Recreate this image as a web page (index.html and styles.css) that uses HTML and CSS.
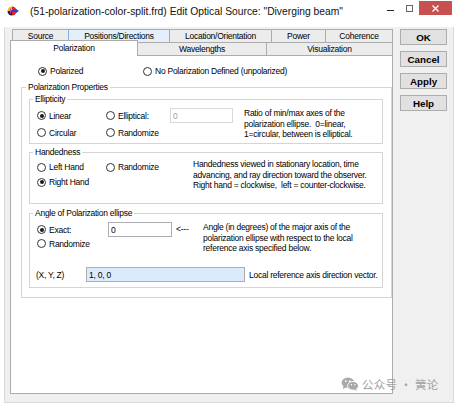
FILE: index.html
```html
<!doctype html>
<html lang="en">
    <head>
        <meta charset="UTF-8" />
        <title>Edit Optical Source</title>
        <link rel="stylesheet" href="styles.css">
    </head>
    <body>
        <div class="window">
            <div class="titlebar">
                <svg class="app-icon" width="12" height="12" viewBox="0 0 12 12">
                    <path d="M5 1.5 A4.5 4.5 0 0 0 0.5 6 L5 6 Z" fill="#f2c200" />
                    <path d="M0.5 6 A4.5 4.5 0 0 0 5 10.5 L5 6 Z" fill="#1b1b55" />
                    <path d="M5 1.5 A4.5 4.5 0 0 1 5 10.5 Z" fill="#e0202a" />
                    <path d="M3.5 3.5 V8.5" stroke="#c43bc4" stroke-width="1" />
                    <path d="M4 6 H9.5" stroke="#1f45d8" stroke-width="1.6" />
                    <path d="M8.5 3.5 L11.8 6 L8.5 8.5 Z" fill="#1f45d8" />
                </svg>
                <span class="title">(51-polarization-color-split.frd) Edit Optical Source: "Diverging beam"</span>
                <div class="caption-btns">
                    <span class="cap-btn"><span class="min-glyph"></span></span>
                    <span class="cap-btn"><span class="max-glyph"></span></span>
                    <span class="cap-btn close">
                        <svg width="7" height="7" viewBox="0 0 7 7">
                            <path d="M0.5 0.5 L6.5 6.5 M6.5 0.5 L0.5 6.5" stroke="#fff" stroke-width="1.3" />
                        </svg>
                    </span>
                </div>
            </div>

            <div class="client">
                <div class="tab-control">
                    <div class="tab-row back">
                        <div class="tab w-source">Source</div>
                        <div class="tab hover w-positions">Positions/Directions</div>
                        <div class="tab w-location">Location/Orientation</div>
                        <div class="tab w-power">Power</div>
                        <div class="tab w-coherence">Coherence</div>
                    </div>
                    <div class="tab-row front">
                        <div class="tab selected w-polar">Polarization</div>
                        <div class="tab w-wave">Wavelengths</div>
                        <div class="tab w-vis">Visualization</div>
                    </div>

                    <div class="tab-panel">
                        <div class="mode-row">
                            <label class="radio-item mode-first"><span class="radio checked"></span>Polarized</label>
                            <label class="radio-item"><span class="radio"></span>No Polarization Defined (unpolarized)</label>
                        </div>

                        <fieldset class="group outer">
                            <legend>Polarization Properties</legend>

                            <fieldset class="group ellipticity">
                                <legend>Ellipticity</legend>
                                <div class="ell-grid">
                                    <label class="radio-item"><span class="radio checked"></span>Linear</label>
                                    <label class="radio-item"><span class="radio"></span>Elliptical:</label>
                                    <input class="field disabled w-ratio" type="text" value="0" />
                                    <p class="desc span2 ell-desc">Ratio of min/max axes of the<br>polarization ellipse.&nbsp; 0=linear,<br>1=circular, between is elliptical.</p>
                                    <label class="radio-item"><span class="radio"></span>Circular</label>
                                    <label class="radio-item"><span class="radio"></span>Randomize</label>
                                </div>
                            </fieldset>

                            <fieldset class="group handedness">
                                <legend>Handedness</legend>
                                <div class="hand-grid">
                                    <label class="radio-item"><span class="radio"></span>Left Hand</label>
                                    <label class="radio-item"><span class="radio"></span>Randomize</label>
                                    <p class="desc span2 hand-desc">Handedness viewed in stationary location, time<br>advancing, and ray direction toward the observer.<br>Right hand = clockwise,&nbsp; left = counter-clockwise.</p>
                                    <label class="radio-item"><span class="radio checked"></span>Right Hand</label>
                                </div>
                            </fieldset>

                            <fieldset class="group angle">
                                <legend>Angle of Polarization ellipse</legend>
                                <div class="angle-grid">
                                    <label class="radio-item"><span class="radio checked"></span>Exact:</label>
                                    <input class="field w-angle" type="text" value="0" />
                                    <span class="arrow">&lt;---</span>
                                    <p class="desc span2">Angle (in degrees) of the major axis of the<br>polarization ellipse with respect to the local<br>reference axis specified below.</p>
                                    <label class="radio-item"><span class="radio"></span>Randomize</label>
                                </div>
                                <div class="xyz-row">
                                    <span class="xyz-label">(X, Y, Z)</span>
                                    <input class="field vector w-vector" type="text" value="1, 0, 0" />
                                    <span class="xyz-note">Local reference axis direction vector.</span>
                                </div>
                            </fieldset>
                        </fieldset>
                    </div>
                </div>

                <div class="buttons">
                    <button class="btn">OK</button>
                    <button class="btn">Cancel</button>
                    <button class="btn">Apply</button>
                    <button class="btn">Help</button>
                </div>
            </div>

            <div class="watermark">
                <svg width="18" height="14" viewBox="0 0 18 14">
                    <ellipse cx="7" cy="5.6" rx="6.4" ry="5.2" fill="#a9a9a9" />
                    <path d="M2.5 9 L2 12 L5.5 10.2 Z" fill="#a9a9a9" />
                    <ellipse cx="12" cy="8.8" rx="5.4" ry="4.4" fill="#a9a9a9" stroke="#fff" stroke-width="1" />
                    <path d="M15 12 L16.2 13.8 L13 12.8 Z" fill="#a9a9a9" />
                    <circle cx="4.8" cy="4.2" r="0.9" fill="#fff" />
                    <circle cx="8.6" cy="4.2" r="0.9" fill="#fff" />
                    <circle cx="10.4" cy="7.8" r="0.7" fill="#fff" />
                    <circle cx="13.8" cy="7.8" r="0.7" fill="#fff" />
                </svg>
                <span>公众号 · 簧论</span>
            </div>
        </div>
    </body>
</html>
```

FILE: styles.css
```css
body {
    margin: 0;
    font-family: "Liberation Sans", Arial, sans-serif;
    font-size: 8.5px;
    letter-spacing: -0.25px;
    color: #000;
    background-color: #fff;
}
.window {
    position: relative;
    width: 458px;
    height: 403px;
    display: flex;
    flex-direction: column;
    background-color: #fff;
    overflow: hidden;
}

/* Title bar */
.titlebar {
    height: 27px;
    flex-shrink: 0;
    display: flex;
    align-items: flex-start;
}
.app-icon {
    margin: 5px 0 0 7px;
    flex-shrink: 0;
}
.title {
    margin: 6px 0 0 11px;
    font-size: 10.3px;
    line-height: 12px;
    letter-spacing: 0;
    color: #111;
    white-space: nowrap;
}
.caption-btns {
    margin-left: auto;
    margin-right: 6px;
    display: flex;
    align-items: flex-start;
}
.cap-btn {
    width: 19px;
    height: 15px;
    display: flex;
    justify-content: center;
    align-items: flex-start;
}
.min-glyph {
    width: 7px;
    height: 1px;
    margin-top: 10px;
    background-color: #222;
}
.max-glyph {
    width: 7px;
    height: 7px;
    margin-top: 5px;
    box-sizing: border-box;
    border: 1px solid #666;
}
.cap-btn.close {
    width: 33px;
    height: 14px;
    margin-top: 1px;
    align-items: center;
    background-color: #c75050;
}

/* Client area */
.client {
    flex: 1;
    margin: 0 4px;
    display: flex;
    gap: 7px;
    padding: 2px 6px 8px 5px;
    background-color: #f0f0f0;
    border: 1px solid #dadada;
    border-top: none;
}
.tab-control {
    width: 383px;
    display: flex;
    flex-direction: column;
}
.tab-row {
    display: flex;
    align-items: flex-start;
    height: 13px;
}
.tab-row.back {
    margin-left: 2px;
}
.tab {
    box-sizing: border-box;
    height: 13px;
    line-height: 12px;
    margin-left: -1px;
    text-align: center;
    white-space: nowrap;
    border: 1px solid #acacac;
    border-bottom: none;
    background-color: #ececec;
}
.tab:first-child {
    margin-left: 0;
}
.tab.hover {
    background-color: #e3effa;
    border-color: #7eb4ea;
    position: relative;
    z-index: 1;
}
.tab.selected {
    position: relative;
    z-index: 2;
    height: 16px;
    margin-top: -2px;
    margin-bottom: -1px;
    padding-top: 1px;
    background-color: #fff;
}
.w-source { width: 57px; }
.w-positions { width: 102px; }
.w-location { width: 103px; }
.w-power { width: 55px; }
.w-coherence { width: 68px; }
.w-polar { width: 128px; }
.w-wave { width: 130px; }
.w-vis { width: 127px; }

.tab-panel {
    flex: 1;
    background-color: #fff;
    border: 1px solid #acacac;
    padding: 10px 0 0 10px;
}

/* Radios */
.radio-item {
    display: flex;
    align-items: center;
    gap: 3px;
    white-space: nowrap;
}
.radio {
    box-sizing: border-box;
    width: 9px;
    height: 9px;
    flex-shrink: 0;
    border: 1px solid #333;
    border-radius: 50%;
    background-color: #fff;
    display: flex;
    align-items: center;
    justify-content: center;
}
.radio.checked::after {
    content: "";
    width: 4px;
    height: 4px;
    border-radius: 50%;
    background-color: #1a1a1a;
}
.mode-row {
    display: flex;
    height: 10px;
    margin-left: 17px;
}
.mode-first {
    width: 105px;
}

/* Group boxes */
.group {
    margin: 0;
    min-width: 0;
    border: 1px solid #d5d5d5;
}
.group legend {
    padding: 0 2px;
    line-height: 11px;
    margin-left: -4px;
}
.group.outer {
    margin-top: 6px;
    padding: 1px 8px 9px 7px;
}
.group.outer > legend {
    margin-left: -3px;
}
.group.ellipticity {
    padding: 3px 0 3px 7px;
}
.group.handedness {
    margin-top: 3px;
    padding: 2px 0 14px 7px;
}
.group.angle {
    margin-top: 4px;
    padding: 3px 0 5px 7px;
}

.desc {
    margin: 0;
    line-height: 10.5px;
    white-space: nowrap;
}
.span2 {
    grid-row: span 2;
}
.ell-grid {
    display: grid;
    grid-template-columns: 69px 64px 63px 1fr;
    grid-template-rows: 15px 15px;
    row-gap: 2px;
}
.ell-desc {
    margin-left: 11px;
}
.hand-grid {
    display: grid;
    grid-template-columns: 69px 87px 1fr;
    grid-template-rows: 14px 14px;
    row-gap: 1px;
}
.hand-desc {
    margin-top: -1px;
}
.angle-grid {
    display: grid;
    grid-template-columns: 71px 64px 31px 1fr;
    grid-template-rows: 15px 13px;
}
.arrow {
    padding-left: 4px;
    line-height: 15px;
}

/* Edit boxes */
.field {
    box-sizing: border-box;
    height: 15px;
    margin: 0;
    padding: 0 2px;
    border: 1px solid #abadb3;
    background-color: #fff;
    color: #000;
    font: inherit;
    letter-spacing: inherit;
    outline: none;
}
.field.disabled {
    border-color: #d9d9d9;
    color: #a0a0a0;
}
.field.vector {
    background-color: #dcebfc;
}
.w-ratio { width: 63px; }
.w-angle { width: 64px; }
.w-vector { width: 159px; }

.xyz-row {
    display: flex;
    align-items: center;
    height: 15px;
    margin-top: 17px;
    margin-left: -1px;
}
.xyz-label {
    width: 50px;
}
.xyz-note {
    margin-left: 4px;
    white-space: nowrap;
}

/* Dialog buttons */
.buttons {
    width: 47px;
    display: flex;
    flex-direction: column;
    gap: 6px;
}
.btn {
    box-sizing: border-box;
    height: 16px;
    padding: 0;
    border: 1px solid #adadad;
    background-color: #e1e1e1;
    color: #000;
    font-family: "Liberation Sans", Arial, sans-serif;
    font-size: 9.8px;
    font-weight: bold;
    letter-spacing: 0;
}

/* Watermark overlay */
.watermark {
    position: absolute;
    left: 341px;
    top: 377px;
    display: flex;
    align-items: center;
    gap: 3px;
    color: #a0a0a0;
    font-family: "Noto Sans CJK SC", sans-serif;
    font-size: 11.5px;
    letter-spacing: 0.3px;
    line-height: 14px;
}
```
